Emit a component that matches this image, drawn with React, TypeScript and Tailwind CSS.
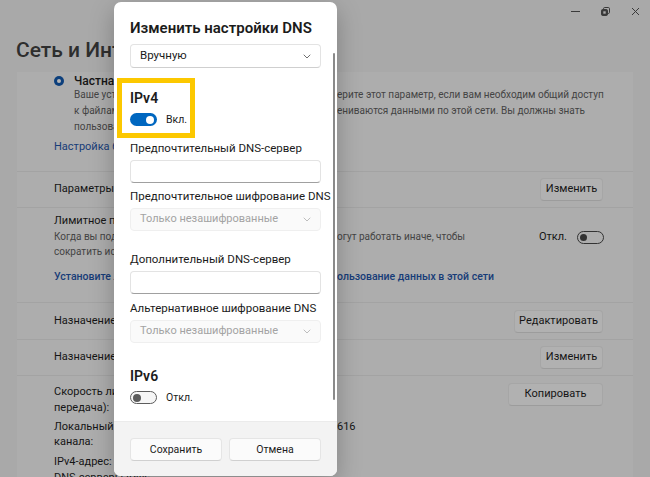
import React from "react";

function Chevron({ color = "#5f5f5f" }: { color?: string }) {
  return (
    <svg width="8" height="5" viewBox="0 0 8 5" fill="none">
      <path d="M1 1l3 3 3-3" stroke={color} strokeWidth="0.9" strokeLinecap="round" strokeLinejoin="round" />
    </svg>
  );
}

function BgButton({ children, w }: { children: React.ReactNode; w: string }) {
  return (
    <div className={`flex h-[23px] items-center justify-center rounded-[4px] border border-[#a6a6a6] border-b-[#9c9c9c] bg-[#b1b1b1] text-[11px] text-[#151515] ${w}`}>
      {children}
    </div>
  );
}

export default function App() {
  return (
    <div className="relative h-[477px] w-[650px] overflow-hidden bg-[#a9a9a9] font-['Roboto',sans-serif]">
      {/* window controls */}
      <div className="flex h-[22px] justify-end">
        <div className="flex w-[30px] items-center justify-center">
          <div className="h-[1px] w-[9px] bg-[#3a3a3a]" />
        </div>
        <div className="flex w-[30px] items-center justify-center">
          <svg width="9" height="9" viewBox="0 0 9 9">
            <rect x="2.5" y="0.5" width="6" height="6" rx="1.2" fill="none" stroke="#3a3a3a" />
            <rect x="0.5" y="2.5" width="6" height="6" rx="1.2" fill="#3a3a3a" stroke="#3a3a3a" />
            <rect x="2.3" y="4.3" width="2.4" height="2.4" fill="#a9a9a9" />
          </svg>
        </div>
        <div className="flex w-[30px] items-center justify-center">
          <svg width="9" height="9" viewBox="0 0 9 9">
            <path d="M1 1l7 7M8 1l-7 7" stroke="#3a3a3a" strokeWidth="1" />
          </svg>
        </div>
      </div>

      {/* page title */}
      <div className="ml-[16px] mt-[14px] h-[36px] whitespace-nowrap text-[21px] font-medium leading-[28px] text-[#2e2e2e]">
        Сеть и Интернет &gt; Ethernet
      </div>

      {/* card */}
      <div className="ml-[17px] w-[616px] bg-[#adadad] text-[#151515]">
        {/* section 1 */}
        <div className="h-[100px] border-b border-[#a3a3a3] pl-[37px]">
          <div className="flex items-center pt-[1px]">
            <div className="flex h-[10px] w-[10px] items-center justify-center rounded-full bg-[#0c3f7c]">
              <div className="h-[4px] w-[4px] rounded-full bg-[#b5b5b5]" />
            </div>
            <div className="ml-[10px] text-[12px] font-medium leading-[16px]">Частная сеть</div>
          </div>
          <div className="ml-[20px] mt-[-2px] text-[10px] leading-[16px] text-[#444]">
            <div className="flex whitespace-nowrap">
              <span className="w-[263px] shrink-0 overflow-hidden">Ваше устройство доступно для обнаружения в сети. Выб</span>
              <span>ерите этот параметр, если вам необходим общий доступ</span>
            </div>
            <div className="flex whitespace-nowrap">
              <span className="w-[263px] shrink-0 overflow-hidden">к файлам или если приложения обм</span>
              <span>ениваются данными по этой сети. Вы должны знать</span>
            </div>
            <div className="w-[263px] overflow-hidden whitespace-nowrap">пользователей и устройства в сети и доверять им.</div>
          </div>
          <div className="mt-[4px] text-[11px] leading-[16px] text-[#173c78]">
            Настройка брандмауэра и безопасности
          </div>
        </div>

        {/* row A */}
        <div className="flex h-[36px] items-center justify-between border-b border-[#a3a3a3] pl-[37px] pr-[30px]">
          <div className="text-[11px]">Параметры прокси-сервера</div>
          <BgButton w="w-[63px]">Изменить</BgButton>
        </div>

        {/* row B */}
        <div className="h-[95px] border-b border-[#a3a3a3] pl-[37px] pr-[29px] pt-[5px]">
          <div className="flex items-start justify-between">
            <div>
              <div className="text-[11px] leading-[16px]">Лимитное подключение</div>
              <div className="text-[10px] leading-[15px] text-[#444]">
                <div className="flex whitespace-nowrap">
                  <span className="w-[283px] shrink-0 overflow-hidden">Когда вы подключены к лимитному тарифному плану, некоторые приложения м</span>
                  <span>огут работать иначе, чтобы</span>
                </div>
                <div className="w-[283px] overflow-hidden whitespace-nowrap">сократить использование данных.</div>
              </div>
            </div>
            <div className="mt-[16px] flex items-center gap-[10px]">
              <span className="text-[11px]">Откл.</span>
              <div className="flex h-[13px] w-[27px] items-center rounded-full border border-[#333] px-[2px]">
                <div className="h-[7px] w-[7px] rounded-full bg-[#333]" />
              </div>
            </div>
          </div>
          <div className="mt-[10px] flex whitespace-nowrap text-[10.5px] font-medium leading-[16px] text-[#173c78]">
            <span className="w-[283px] shrink-0 overflow-hidden">Установите лимит трафика, чтобы контролировать исп</span>
            <span>ользование данных в этой сети</span>
          </div>
        </div>

        {/* row C */}
        <div className="flex h-[37px] items-center justify-between border-b border-[#a3a3a3] pl-[37px] pr-[30px]">
          <div className="text-[11px]">Назначение IP-адреса:</div>
          <BgButton w="w-[89px]">Редактировать</BgButton>
        </div>

        {/* row D */}
        <div className="flex h-[36px] items-center justify-between border-b border-[#a3a3a3] pl-[37px] pr-[30px]">
          <div className="text-[11px]">Назначение DNS-сервера:</div>
          <BgButton w="w-[63px]">Изменить</BgButton>
        </div>

        {/* row E */}
        <div className="flex justify-between pl-[37px] pr-[30px] pt-[6px]">
          <div className="mt-[2px] whitespace-nowrap text-[11px] leading-[16px]">
            <div>Скорость линии (прием/</div>
            <div>передача):</div>
            <div className="mt-[3px] flex">
              <div className="w-[120px]">
                <div>Локальный IPv6-адрес</div>
                <div className="leading-[14px]">канала:</div>
              </div>
              <div className="flex">
                <span className="w-[163px] shrink-0 overflow-hidden">fe80::9a1c:4e2b:7d30:5f</span>
                <span>616</span>
              </div>
            </div>
            <div className="mt-[5px]">IPv4-адрес:</div>
            <div>DNS-серверы IPv4:</div>
          </div>
          <div className="pt-[1px]">
            <BgButton w="w-[95px]">Копировать</BgButton>
          </div>
        </div>
      </div>

      {/* dialog */}
      <div className="absolute left-[114px] top-[2px] flex h-[474px] w-[223px] flex-col overflow-hidden rounded-[7px] bg-white text-[#1b1b1b] shadow-[0_8px_24px_rgba(0,0,0,0.25)]">
        <div className="relative flex-1 px-4 pt-4">
          <div className="whitespace-nowrap text-[15px] font-semibold leading-[20px]">Изменить настройки DNS</div>
          <div className="mt-[6px] flex h-[24px] items-center justify-between rounded-[4px] border border-[#e3e3e3] border-b-[#cfcfcf] pl-[9px] pr-[9px] text-[11.5px]">
            <span>Вручную</span>
            <Chevron />
          </div>

          <div className="mt-[20px] text-[14px] font-semibold leading-[20px]">IPv4</div>
          <div className="mt-[5px] flex items-center gap-[9px]">
            <div className="flex h-[13px] w-[27px] items-center justify-end rounded-full bg-[#0067c0] pr-[3px]">
              <div className="h-[8px] w-[8px] rounded-full bg-white" />
            </div>
            <span className="text-[10.5px] leading-[13px]">Вкл.</span>
          </div>

          <div className="mt-[14px] whitespace-nowrap text-[11.5px] leading-[16px]">Предпочтительный DNS-сервер</div>
          <div className="mt-[4px] h-[23px] rounded-[4px] border border-[#e3e3e3] border-b-[#a0a0a0]" />

          <div className="mt-[5px] whitespace-nowrap text-[11.5px] leading-[16px]">Предпочтительное шифрование DNS</div>
          <div className="mt-[4px] flex h-[23px] items-center justify-between rounded-[4px] border border-[#efefef] bg-[#fafafa] pl-[9px] pr-[9px] text-[11px] text-[#a3a3a3]">
            <span>Только незашифрованные</span>
            <Chevron color="#b5b5b5" />
          </div>

          <div className="mt-[20px] whitespace-nowrap text-[11.5px] leading-[16px]">Дополнительный DNS-сервер</div>
          <div className="mt-[4px] h-[23px] rounded-[4px] border border-[#e3e3e3] border-b-[#a0a0a0]" />

          <div className="mt-[6px] whitespace-nowrap text-[11.5px] leading-[16px]">Альтернативное шифрование DNS</div>
          <div className="mt-[4px] flex h-[23px] items-center justify-between rounded-[4px] border border-[#efefef] bg-[#fafafa] pl-[9px] pr-[9px] text-[11px] text-[#a3a3a3]">
            <span>Только незашифрованные</span>
            <Chevron color="#b5b5b5" />
          </div>

          <div className="mt-[23px] text-[14px] font-semibold leading-[20px]">IPv6</div>
          <div className="mt-[5px] flex items-center gap-[9px]">
            <div className="flex h-[13px] w-[27px] items-center rounded-full border border-[#5c5c5c] bg-[#f6f6f6] pl-[2px]">
              <div className="h-[8px] w-[8px] rounded-full bg-[#5c5c5c]" />
            </div>
            <span className="text-[10.5px] leading-[13px]">Откл.</span>
          </div>

          {/* scrollbar */}
          <div className="absolute left-[219px] top-[51px] h-[347px] w-[2px] rounded-full bg-[#8a8a8a]" />
        </div>

        <div className="flex h-[55px] gap-[7px] border-t border-[#ebebeb] bg-[#f3f3f3] px-4 pt-[16px]">
          <div className="flex h-[23px] flex-1 items-center justify-center rounded-[4px] border border-[#e5e5e5] border-b-[#d0d0d0] bg-[#fbfbfb] text-[10.5px]">
            Сохранить
          </div>
          <div className="flex h-[23px] flex-1 items-center justify-center rounded-[4px] border border-[#e5e5e5] border-b-[#d0d0d0] bg-[#fbfbfb] text-[10.5px]">
            Отмена
          </div>
        </div>
      </div>

      {/* highlight box */}
      <div className="absolute left-[117px] top-[78px] h-[60px] w-[78px] border-[5px] border-[#fcc800]" />
    </div>
  );
}
